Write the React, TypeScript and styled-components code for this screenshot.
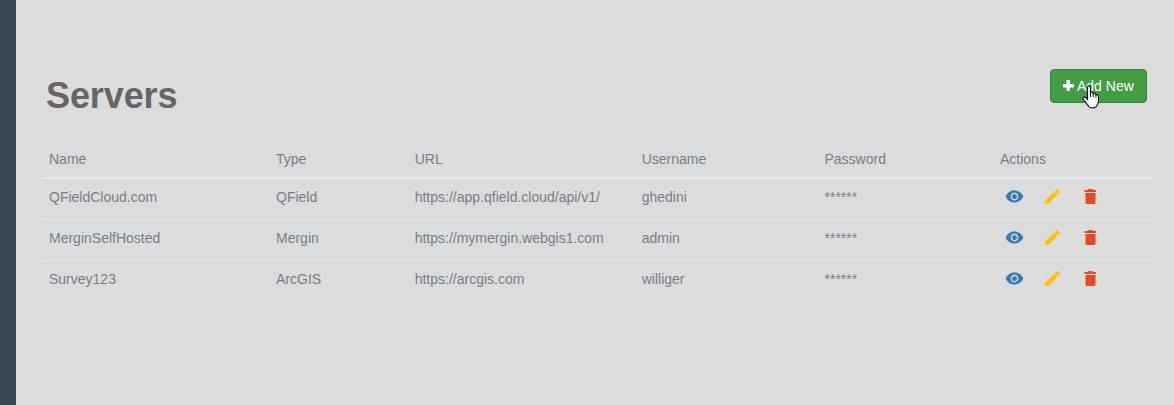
import React from 'react';
import styled, { createGlobalStyle } from 'styled-components';
import { MdVisibility, MdEdit } from 'react-icons/md';

const GlobalStyle = createGlobalStyle`
  *, *::before, *::after { box-sizing: border-box; }
  body {
    margin: 0;
    background: #dcdcdc;
    color: #76808a;
    font: 14px/20px "Liberation Sans", Arial, sans-serif;
  }
`;

const Page = styled.div`
  display: flex;
  height: 100vh;
  overflow: hidden;
`;

const Sidebar = styled.aside`
  flex: none;
  width: 16px;
  background: #394650;
`;

const Content = styled.main`
  flex: 1;
  padding: 69px 22px 0 25px;
`;

const Header = styled.header`
  display: flex;
  justify-content: space-between;
  align-items: flex-start;
  height: 72px;
  padding: 0 5px;
`;

const Title = styled.h1`
  margin: 7px 0 0;
  color: #666;
  font-size: 36px;
  line-height: 40px;
  font-weight: 700;
  letter-spacing: -0.1px;
`;

const AddButton = styled.button`
  position: relative;
  display: flex;
  align-items: center;
  gap: 3px;
  width: 97px;
  height: 34px;
  padding: 0 0 0 11px;
  border: 1px solid #3a833c;
  border-radius: 4px;
  background: #449d44;
  color: #fff;
  font: inherit;
  white-space: nowrap;
  cursor: pointer;
`;

const Pointer = styled.svg`
  position: absolute;
  left: 31px;
  top: 15px;
`;

const Table = styled.table`
  width: 1111px;
  border-collapse: separate;
  border-spacing: 0;
  table-layout: fixed;
`;

const Heading = styled.th<{ $width: number }>`
  width: ${(p) => p.$width}px;
  height: 38px;
  padding: 8px 8px;
  border-bottom: 2px solid #e6eaed;
  font-weight: 400;
  text-align: left;
  vertical-align: top;
`;

const Row = styled.tr`
  &:not(:last-child) > td {
    border-bottom: 1px solid #e9e9e9;
  }
`;

const Cell = styled.td`
  height: 41px;
  padding: 8px;
  vertical-align: top;
  white-space: nowrap;
`;

const Actions = styled.div`
  display: flex;
  align-items: center;
  gap: 18px;
  height: 19px;
  padding-left: 5px;
`;

const Action = styled.span<{ $color: string; $weight?: number }>`
  display: flex;
  justify-content: center;
  width: 20px;
  color: ${(p) => p.$color};

  path:last-child {
    stroke: currentColor;
    stroke-width: ${(p) => p.$weight ?? 0};
  }
`;

const columns: [string, number][] = [
  ['Name', 227],
  ['Type', 138.7],
  ['URL', 227],
  ['Username', 182.8],
  ['Password', 175.5],
  ['Actions', 160],
];

const servers = [
  ['QFieldCloud.com', 'QField', 'https://app.qfield.cloud/api/v1/', 'ghedini', '******'],
  ['MerginSelfHosted', 'Mergin', 'https://mymergin.webgis1.com', 'admin', '******'],
  ['Survey123', 'ArcGIS', 'https://arcgis.com', 'williger', '******'],
];

const PlusIcon = () => (
  <svg width="12" height="12" viewBox="0 0 12 12" fill="#fff" aria-hidden="true">
    <path d="M4.500 .4Q4.500 0 4.900 0H7.600Q8 0 8 .4V4H11.600Q12 4 12 4.400V7.100Q12 7.500 11.600 7.500H8V10.600Q8 11 7.600 11H4.900Q4.500 11 4.500 10.600V7.500H1.400Q1 7.500 1 7.100V4.400Q1 4 1.400 4H4.500Z" />
  </svg>
);

const TrashIcon = () => (
  <svg width="20" height="20" viewBox="0 0 20 20" fill="currentColor" aria-hidden="true">
    <path d="M3.500 3H6.700L7.500 2H11.500L12.300 3H15V5H3.500ZM4.500 6H14.500V15.500Q14.500 17 13 17H6Q4.500 17 4.500 15.500Z" />
  </svg>
);

const HandPointer = () => (
  <Pointer width="18" height="24" viewBox="0 0 18 24" aria-hidden="true">
    <path
      d="M5.500 14.500V2.500C5.500.3 8.500.3 8.500 2.500V8C8.800 6.500 11.200 6.700 11.200 8.500V9C11.700 7.700 13.900 8 13.900 9.700V10.200C14.500 9.200 16.500 9.500 16.500 11.300V16C16.500 18.500 15 19.500 14.700 21.200C13.500 23.500 8 23.500 6.700 21.500C5.500 19 3.300 17.200 1.500 14.500C.2 12.300 2.600 11 4 12.700Z"
      fill="#fff"
      stroke="#151525"
      strokeWidth="1.200"
      strokeLinejoin="round"
    />
    <path d="M8.500 7.500V12M11.200 8.500V12.300M13.900 9.700V12.800" fill="none" stroke="#151525" />
  </Pointer>
);

export default function App() {
  return (
    <Page>
      <GlobalStyle />
      <Sidebar />
      <Content>
        <Header>
          <Title>Servers</Title>
          <AddButton>
            <PlusIcon />
            Add New
            <HandPointer />
          </AddButton>
        </Header>
        <Table>
          <thead>
            <tr>
              {columns.map(([name, width]) => (
                <Heading key={name} $width={width}>{name}</Heading>
              ))}
            </tr>
          </thead>
          <tbody>
            {servers.map((server) => (
              <Row key={server[0]}>
                {server.map((value, i) => (
                  <Cell key={i}>{value}</Cell>
                ))}
                <Cell>
                  <Actions>
                    <Action $color="#337ab7" $weight={0.3}><MdVisibility size={19} /></Action>
                    <Action $color="#ffc107" $weight={0.7}><MdEdit size={19} /></Action>
                    <Action $color="#e64a24"><TrashIcon /></Action>
                  </Actions>
                </Cell>
              </Row>
            ))}
          </tbody>
        </Table>
      </Content>
    </Page>
  );
}
